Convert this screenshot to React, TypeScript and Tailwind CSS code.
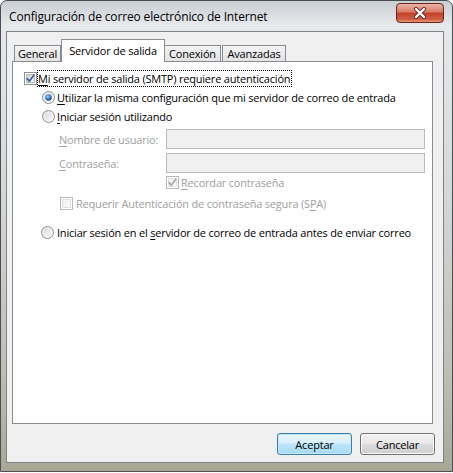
import React from 'react'

const font = "font-['Open_Sans','Noto_Sans',sans-serif]"

function CheckBox({ checked, disabled }: { checked?: boolean; disabled?: boolean }) {
  return (
    <svg width="13" height="13" viewBox="0 0 13 13" className="shrink-0">
      <defs>
        <linearGradient id={disabled ? 'cbd' : 'cb'} x1="0" y1="0" x2="1" y2="1">
          <stop offset="0" stopColor={disabled ? '#f0f0f0' : '#cbcfd5'} />
          <stop offset="1" stopColor={disabled ? '#fbfbfb' : '#f7f8f9'} />
        </linearGradient>
      </defs>
      <rect x="0.5" y="0.5" width="12" height="12" fill="#fff" stroke={disabled ? '#b9b9b9' : '#8e8f8f'} />
      <rect x="2.5" y="2.5" width="8" height="8" fill={`url(#${disabled ? 'cbd' : 'cb'})`} stroke={disabled ? '#e2e2e2' : '#b4b9bf'} />
      {checked && (
        <path
          d="M3.2 6.6 L5.3 9.2 L9.8 3.2"
          fill="none"
          stroke={disabled ? '#a8a8a8' : '#3c5d9c'}
          strokeWidth="1.7"
          strokeLinecap="round"
          strokeLinejoin="round"
        />
      )}
    </svg>
  )
}

function Radio({ checked }: { checked?: boolean }) {
  return (
    <svg width="13" height="13" viewBox="0 0 13 13" className="shrink-0">
      <defs>
        <linearGradient id="rb" x1="0" y1="0" x2="1" y2="1">
          <stop offset="0" stopColor="#d4d6d9" />
          <stop offset="1" stopColor="#fbfbfb" />
        </linearGradient>
        <radialGradient id="rd" cx="0.4" cy="0.35" r="0.7">
          <stop offset="0" stopColor="#a9d4f7" />
          <stop offset="0.6" stopColor="#2f6fb9" />
          <stop offset="1" stopColor="#1b4f8f" />
        </radialGradient>
      </defs>
      <circle cx="6.5" cy="6.5" r="6" fill="url(#rb)" stroke="#8e8f8f" />
      <circle cx="6.5" cy="6.5" r="4.6" fill="none" stroke="#ffffff" strokeOpacity="0.5" />
      {checked && <circle cx="6.5" cy="6.5" r="3.2" fill="url(#rd)" />}
    </svg>
  )
}

function U({ children }: { children: React.ReactNode }) {
  return <span className="underline underline-offset-[2px]">{children}</span>
}

const tab = 'h-[16px] border border-b-0 border-[#898c95] bg-[linear-gradient(180deg,#f3f3f3,#e3e3e3)] flex items-center justify-center'

export default function App() {
  return (
    <div className={`w-[453px] h-[473px] bg-white ${font} text-[11px] tracking-[-0.2px] leading-none text-black whitespace-nowrap`}>
      <div className="w-[453px] h-[472px] rounded-t-[7px] border border-[#4a4f55] bg-[linear-gradient(180deg,#c9ced3_0%,#e6e8eb_5%,#d6d8d6_40%,#bdbdb2_80%,#a8a895_100%)] flex flex-col">
        {/* title bar */}
        <div className="h-[30px] flex items-start justify-between pl-[8px] pr-[8px]">
          <div className="mt-[10px] text-[12px] tracking-[-0.15px]">Configuración de correo electrónico de Internet</div>
          <div className="mt-[2px] w-[48px] h-[20px] rounded-[4px] border border-[#6e2518] bg-[linear-gradient(180deg,#e9b3a6_0%,#d87a63_45%,#c3402a_50%,#cf5e43_85%,#e49a7f_100%)] flex items-center justify-center">
            <svg width="14" height="12" viewBox="0 0 14 12">
              <path d="M3 2 L11 10 M11 2 L3 10" stroke="#5a2a22" strokeWidth="4" strokeLinecap="round" />
              <path d="M3 2 L11 10 M11 2 L3 10" stroke="#ffffff" strokeWidth="2.4" strokeLinecap="round" />
            </svg>
          </div>
        </div>

        {/* client area */}
        <div className="ml-[5px] w-[438px] h-[432px] border border-[#7d838a] bg-[#f0f0f0] flex flex-col">
          <div className="ml-[5px] mt-[7px] flex flex-col">
            {/* tabs */}
            <div className="flex items-end pl-[2px] h-[22px]">
              <div className={`w-[47px] ${tab}`}>General</div>
              <div className="relative z-10 -mb-px w-[104px] h-[23px] border border-b-0 border-[#898c95] bg-white flex items-start justify-center pt-[5px]">
                Servidor de salida
              </div>
              <div className={`w-[56px] border-l-0 ${tab}`}>Conexión</div>
              <div className={`ml-[1px] w-[64px] ${tab}`}>Avanzadas</div>
            </div>

            {/* panel */}
            <div className="w-[421px] h-[363px] border border-[#898c95] bg-white flex flex-col pl-[11px] pt-[8px]">
              <div className="flex items-center h-[17px]">
                <CheckBox checked />
                <span className="py-[2px] pr-[1px] border border-dotted border-black">
                  <U>M</U>i servidor de salida (SMTP) requiere autenticación
                </span>
              </div>

              <div className="flex items-center h-[13px] mt-[4px] pl-[18px]">
                <Radio checked />
                <span className="ml-[2px]">
                  <U>U</U>tilizar la misma configuración que mi servidor de correo de entrada
                </span>
              </div>

              <div className="flex items-center h-[13px] mt-[6px] pl-[18px]">
                <Radio />
                <span className="ml-[2px]">
                  <U>I</U>niciar sesión utilizando
                </span>
              </div>

              <div className="flex items-center h-[20px] mt-[6px] pl-[35px]">
                <span className="w-[107px] text-[#a0a0a0]">
                  <U>N</U>ombre de usuario:
                </span>
                <div className="w-[259px] h-[20px] border border-[#b5bcc4] bg-[#f0f0f0]" />
              </div>

              <div className="flex items-center h-[20px] mt-[4px] pl-[35px]">
                <span className="w-[107px] text-[#a0a0a0]">
                  <U>C</U>ontraseña:
                </span>
                <div className="w-[259px] h-[20px] border border-[#b5bcc4] bg-[#f0f0f0]" />
              </div>

              <div className="flex items-center h-[13px] mt-[3px] pl-[142px]">
                <CheckBox checked disabled />
                <span className="ml-[2px] text-[#a0a0a0]">
                  <U>R</U>ecordar contraseña
                </span>
              </div>

              <div className="flex items-center h-[13px] mt-[8px] pl-[36px]">
                <CheckBox disabled />
                <span className="ml-[3px] text-[#a0a0a0]">
                  Requerir Autenticación de contraseña segura (S<U>P</U>A)
                </span>
              </div>

              <div className="flex items-center h-[13px] mt-[16px] pl-[17px]">
                <Radio />
                <span className="ml-[3px]">
                  Iniciar sesión en el <U>s</U>ervidor de correo de entrada antes de enviar correo
                </span>
              </div>
            </div>

            {/* buttons */}
            <div className="flex justify-end gap-[8px] mt-[9px] pr-[8px]">
              <button className="w-[75px] h-[22px] rounded-[3px] border border-[#3c7fb1] bg-[linear-gradient(180deg,#eaf6fd_0%,#d9f0fc_45%,#bee6fd_50%,#a7d9f5_100%)] shadow-[inset_0_0_0_1px_#c4e5f6]">
                Aceptar
              </button>
              <button className="w-[75px] h-[22px] rounded-[3px] border border-[#707070] bg-[linear-gradient(180deg,#f2f2f2_0%,#ebebeb_45%,#dddddd_50%,#cfcfcf_100%)] shadow-[inset_0_0_0_1px_#fcfcfc]">
                Cancelar
              </button>
            </div>
          </div>
        </div>
      </div>
    </div>
  )
}
